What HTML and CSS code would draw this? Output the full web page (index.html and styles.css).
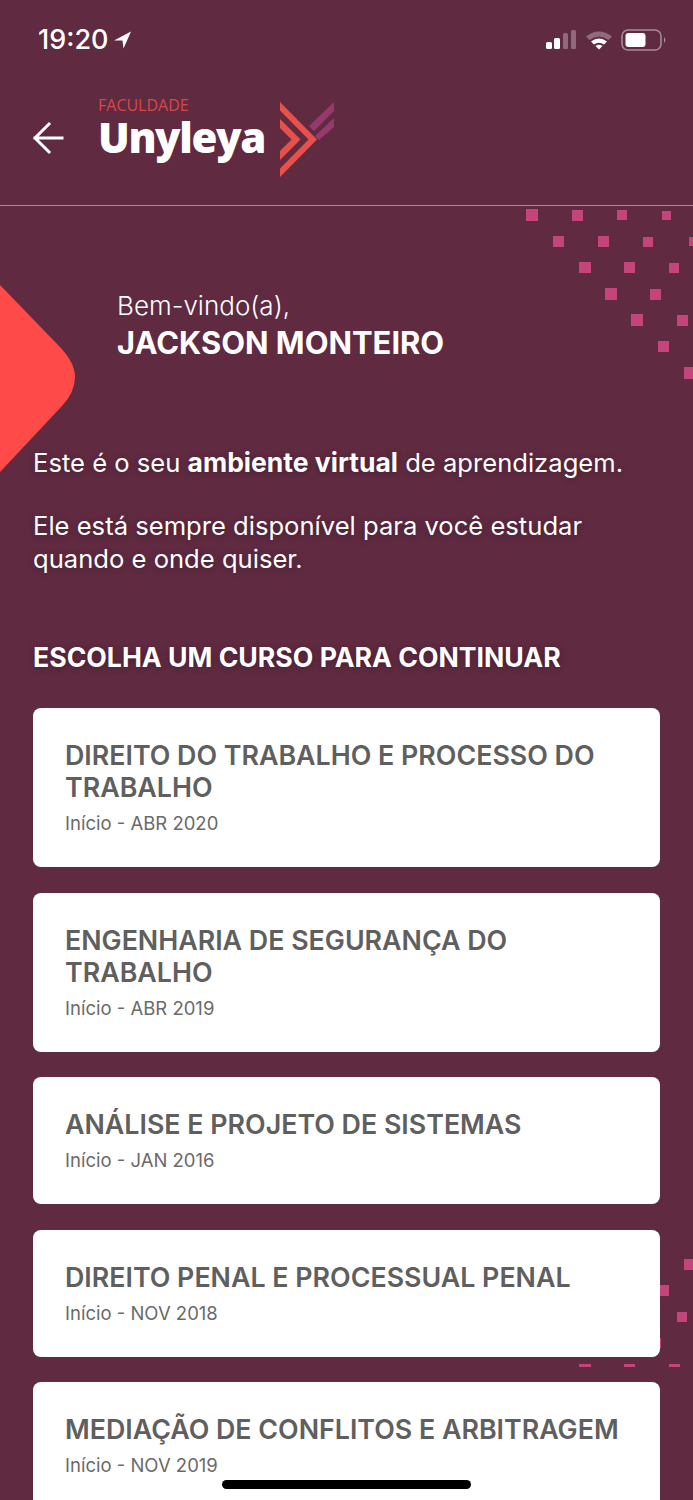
FILE: index.html
```html
<!DOCTYPE html>
<html lang="pt-BR">
<head>
    <meta charset="UTF-8">
    <meta name="viewport" content="width=device-width, initial-scale=1.0">
    <title>Unyleya</title>
    <link rel="stylesheet" href="styles.css">
</head>
<body>
    <svg class="decor" width="693" height="1500" viewBox="0 0 693 1500">
        <g fill="#c4447c">
            <rect x="526" y="209" width="12" height="12"/><rect x="572" y="210" width="11" height="11"/><rect x="617" y="210" width="10" height="10"/><rect x="662" y="211" width="9" height="9"/>
            <rect x="553" y="236" width="11" height="11"/><rect x="598" y="236" width="11" height="11"/><rect x="643" y="237" width="10" height="10"/><rect x="689" y="237" width="4" height="9"/>
            <rect x="579" y="262" width="12" height="11"/><rect x="624" y="262" width="11" height="11"/><rect x="669" y="263" width="10" height="10"/>
            <rect x="605" y="288" width="12" height="12"/><rect x="650" y="289" width="11" height="11"/>
            <rect x="631" y="314" width="12" height="12"/><rect x="677" y="315" width="11" height="11"/>
            <rect x="658" y="341" width="11" height="11"/>
            <rect x="684" y="367" width="9" height="12"/>
            <rect x="684" y="1259" width="9" height="11"/><rect x="660" y="1285" width="9" height="11"/><rect x="677" y="1312" width="10" height="10"/>
            <rect x="660" y="1338" width="1" height="10"/>
            <rect x="579" y="1364" width="12" height="3"/><rect x="624" y="1364" width="11" height="3"/><rect x="669" y="1364" width="11" height="3"/>
        </g>
        <path fill="#ff4a4a" d="M0 285 L58 345 Q75 362 75 377 Q75 392 62 406 L0 472 Z"/>
    </svg>

    <div class="status-bar">
        <div class="status-time">
            <span>19:20</span>
            <svg width="18" height="18" viewBox="0 0 18 18"><path fill="#fff" d="M0 9.5 L17 0.5 L9.5 17.5 L8.5 9.5 Z"/></svg>
        </div>
        <div class="status-icons">
            <svg width="31" height="20" viewBox="0 0 31 20">
                <rect x="0" y="12" width="6" height="7" rx="1.5" fill="#fff"/>
                <rect x="8" y="8" width="6" height="11" rx="1.5" fill="#fff"/>
                <rect x="17" y="3" width="5" height="16" rx="1.5" fill="#8f6a7e"/>
                <rect x="25" y="0" width="5" height="19" rx="1.5" fill="#8f6a7e"/>
            </svg>
            <svg width="28" height="20" viewBox="0 0 28 20">
                <path fill="#8f6a7e" d="M1 6.5 Q14 -3.5 27 6.5 L23.5 10 Q14 3 4.5 10 Z"/>
                <path fill="#fff" d="M6 11.5 Q14 5.5 22 11.5 L19 14.5 Q14 11 9 14.5 Z"/>
                <path fill="#fff" d="M10.5 16 Q14 13.5 17.5 16 L14 19.5 Z"/>
            </svg>
            <svg width="46" height="22" viewBox="0 0 46 22">
                <rect x="1" y="1" width="39" height="20" rx="6" fill="none" stroke="#a68a99" stroke-width="1.6"/>
                <rect x="4.5" y="4" width="20" height="14" rx="3" fill="#fff"/>
                <path fill="#a68a99" d="M43 8 Q46 11 43 14 Z"/>
            </svg>
        </div>
    </div>

    <header class="top-bar">
        <svg class="back-arrow" width="34" height="34" viewBox="0 0 34 34">
            <path fill="none" stroke="#fff" stroke-width="3" stroke-linecap="square" d="M3 17 H30 M17 3 L3 17 L17 31"/>
        </svg>
        <div class="logo">
            <div class="logo-text">
                <span class="logo-small">FACULDADE</span>
                <span class="logo-name">Unyleya</span>
            </div>
            <svg width="56" height="78" viewBox="0 0 56 78">
                <path fill="#e8504a" d="M0 1 L37 38.5 L0 76 V67.5 L28.5 38.5 L0 9.5 Z"/>
                <path fill="#e8504a" d="M0 18 L20.5 38.5 L0 59 V50 L11.5 38.5 L0 27 Z"/>
                <path fill="#963a6e" d="M54 1 V10 L34 30 L29 25 Z M54 17 V26 L39 39 L35 35 Z"/>
            </svg>
        </div>
    </header>

    <main class="content">
        <div class="welcome">
            <p class="welcome-hello">Bem-vindo(a),</p>
            <p class="welcome-name">JACKSON MONTEIRO</p>
        </div>
        <p class="intro">Este é o seu <strong>ambiente virtual</strong> de aprendizagem.</p>
        <p class="intro intro-second">Ele está sempre disponível para você estudar quando e onde quiser.</p>
        <h2 class="section-title">ESCOLHA UM CURSO PARA CONTINUAR</h2>

        <div class="course-list">
            <div class="course-card">
                <h3>DIREITO DO TRABALHO E PROCESSO DO TRABALHO</h3>
                <p>Início - ABR 2020</p>
            </div>
            <div class="course-card">
                <h3>ENGENHARIA DE SEGURANÇA DO TRABALHO</h3>
                <p>Início - ABR 2019</p>
            </div>
            <div class="course-card">
                <h3>ANÁLISE E PROJETO DE SISTEMAS</h3>
                <p>Início - JAN 2016</p>
            </div>
            <div class="course-card">
                <h3>DIREITO PENAL E PROCESSUAL PENAL</h3>
                <p>Início - NOV 2018</p>
            </div>
            <div class="course-card">
                <h3>MEDIAÇÃO DE CONFLITOS E ARBITRAGEM</h3>
                <p>Início - NOV 2019</p>
            </div>
        </div>
    </main>

    <div class="home-indicator"></div>
</body>
</html>
```

FILE: styles.css
```css
html {
    background-color: #602a41;
}
body {
    margin: 0;
    height: 1500px;
    overflow: hidden;
    position: relative;
    background-color: #602a41;
    color: #fff;
    font-family: Inter, "Noto Sans", sans-serif;
}
p, h2, h3 {
    margin: 0;
}
.decor {
    position: absolute;
    top: 0;
    left: 0;
}
.status-bar {
    position: relative;
    height: 80px;
    box-sizing: border-box;
    padding: 25px 26px 0 38px;
    display: flex;
    justify-content: space-between;
    align-items: flex-start;
}
.status-time {
    display: flex;
    align-items: center;
    gap: 6px;
    font-size: 27px;
    font-weight: 500;
    line-height: 30px;
}
.status-icons {
    display: flex;
    align-items: center;
    gap: 8px;
    margin-top: 4px;
}
.top-bar {
    position: relative;
    height: 126px;
    box-sizing: border-box;
    padding: 21px 0 0 32px;
    border-bottom: 1px solid #a98c9b;
    display: flex;
    align-items: flex-start;
}
.back-arrow {
    margin-top: 20px;
}
.logo {
    display: flex;
    margin-left: 32px;
}
.logo-text {
    display: flex;
    flex-direction: column;
    width: 182px;
    margin-top: -4px;
}
.logo-small {
    font-family: "Open Sans", sans-serif;
    font-size: 16px;
    line-height: 16px;
    color: #d8474a;
}
.logo-name {
    font-family: "Open Sans", sans-serif;
    font-size: 42px;
    font-weight: 800;
    line-height: 42px;
    margin-top: 3px;
    letter-spacing: -1.4px;
}
.content {
    position: relative;
    padding: 0 33px;
}
.welcome {
    padding: 84px 0 0 84px;
    height: 155px;
    box-sizing: border-box;
}
.welcome-hello {
    font-size: 26px;
    font-weight: 300;
    line-height: 32px;
}
.welcome-name {
    font-size: 30.9px;
    font-weight: 700;
    line-height: 40px;
    margin-top: 1px;
}
.intro {
    font-size: 25.6px;
    line-height: 33px;
    margin-top: 85px;
    text-shadow: 0 1px 6px rgba(0, 0, 0, 0.3);
}
.intro strong {
    font-size: 26.5px;
}
.intro-second {
    margin-top: 30px;
}
.section-title {
    font-size: 26.65px;
    font-weight: 700;
    line-height: 32px;
    margin-top: 66px;
    text-shadow: 0 1px 6px rgba(0, 0, 0, 0.3);
}
.course-list {
    display: flex;
    flex-direction: column;
    gap: 25.5px;
    margin-top: 35px;
}
.course-card {
    background-color: #fff;
    border-radius: 8px;
    padding: 31px 32px 32px;
}
.course-card h3 {
    font-size: 26.8px;
    font-weight: 600;
    line-height: 32px;
    color: #5f5f5f;
}
.course-card p {
    font-size: 18.5px;
    line-height: 24px;
    margin-top: 8px;
    color: #6a6a6a;
}
.home-indicator {
    position: absolute;
    left: 222px;
    top: 1480px;
    width: 249px;
    height: 9px;
    border-radius: 5px;
    background-color: #000;
}
```
